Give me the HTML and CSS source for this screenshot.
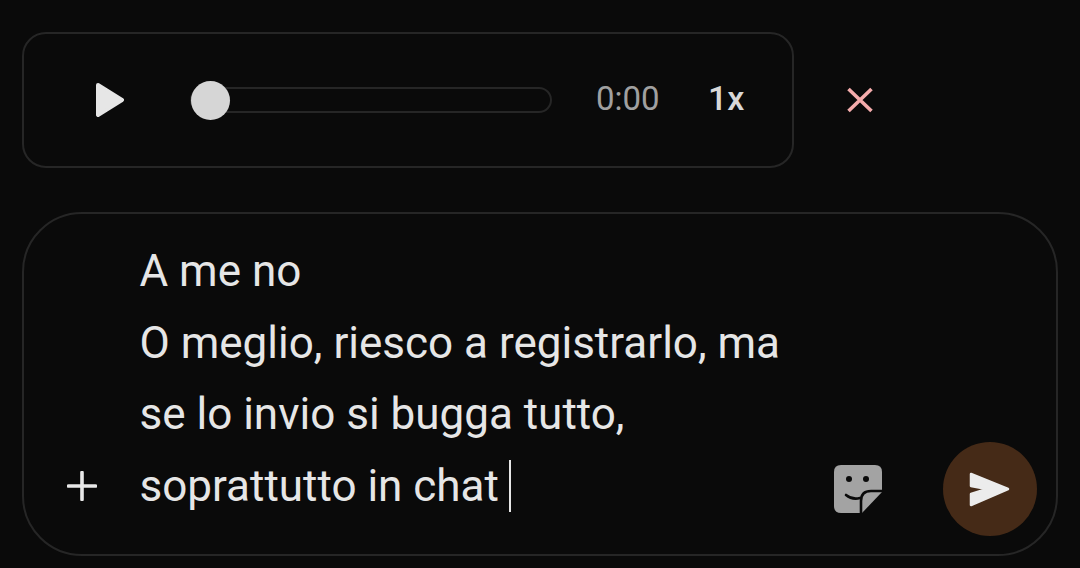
FILE: index.html
```html
<!DOCTYPE html>
<html lang="it">
<head>
<meta charset="utf-8">
<title>Chat</title>
<link rel="stylesheet" href="styles.css">
</head>
<body>
<main class="page">
  <section class="voice-row">
    <div class="player">
      <svg class="play" viewBox="0 0 28 34" width="28" height="34"><path d="M2 2 L26 17 L2 32 Z" fill="#e6e6e6" stroke="#e6e6e6" stroke-width="4" stroke-linejoin="round"/></svg>
      <div class="track"><span class="thumb"></span></div>
      <span class="time">0:00</span>
      <span class="speed">1x</span>
    </div>
    <svg class="close" viewBox="0 0 26 26" width="26" height="26"><path d="M1.500 2 L24.500 24 M24.500 2 L1.500 24" stroke="#f4acac" stroke-width="3.6" fill="none"/></svg>
  </section>
  <section class="composer">
    <svg class="plus" viewBox="0 0 30 30" width="30" height="30"><path d="M15 1.500 V28.500 M1.500 15 H28.500" stroke="#e8e8e8" stroke-width="3.6" stroke-linecap="round" fill="none"/></svg>
    <div class="text">
      <div>A me no</div>
      <div>O meglio, riesco a registrarlo, ma</div>
      <div>se lo invio si bugga tutto,</div>
      <div>soprattutto in chat<span class="caret"></span></div>
    </div>
    <svg class="sticker" viewBox="0 0 48 48" width="48" height="48">
      <path d="M7 0 H41 Q48 0 48 7 V27 L28 48 H7 Q0 48 0 41 V7 Q0 0 7 0 Z" fill="#a3a3a3"/>
      <circle cx="15" cy="14" r="3" fill="#0a0a0a"/>
      <circle cx="32" cy="14" r="3" fill="#0a0a0a"/>
      <path d="M12 30 Q18 35 26 33" stroke="#0a0a0a" stroke-width="2.6" fill="none" stroke-linecap="round"/>
      <path d="M27 48 V36 Q27 26 37 26 H48" stroke="#0a0a0a" stroke-width="2.6" fill="none"/>
    </svg>
    <button class="send" type="button">
      <svg viewBox="0 0 42 36" width="42" height="36"><path d="M2 3 L39 18 L2 34 V23 L18 18 L2 15 Z" fill="#ececec" stroke="#ececec" stroke-width="2.500" stroke-linejoin="round"/></svg>
    </button>
  </section>
</main>
</body>
</html>
```
FILE: styles.css
```css
* { box-sizing: border-box; }
html, body { margin: 0; height: 100%; background: #0a0a0a; overflow: hidden; }
body { font-family: Roboto, "Noto Sans", sans-serif; color: #e6e6e6; }
.page { padding: 32px 22px 12px; display: flex; flex-direction: column; gap: 44px; }
.voice-row { display: flex; align-items: center; gap: 53px; }
.player {
  width: 772px; height: 136px;
  border: 2px solid #262626; border-radius: 24px;
  display: flex; align-items: center;
  padding-left: 72px;
}
.play { flex: none; }
.track {
  flex: none; width: 362px; height: 26px; margin-left: 66px;
  border: 2px solid #262626; border-radius: 13px;
  display: flex; align-items: center;
}
.thumb { width: 39px; height: 39px; margin-left: -1px; border-radius: 50%; background: #d6d6d6; flex: none; }
.time { margin-left: 44px; font-size: 33px; color: #a0a0a0; width: 63px; line-height: 1; margin-top: -3px; }
.speed { margin-left: 49px; font-size: 34px; font-weight: 500; color: #d8d8d8; line-height: 1; margin-top: -5px; }
.close { flex: none; }
.composer {
  width: 1036px; height: 344px;
  border: 2px solid #262626;
  border-radius: 60px;
  display: flex; align-items: flex-end;
  padding: 0 20px 18px 43px;
}
.plus { flex: none; margin-bottom: 35px; }
.text { flex: none; width: 694px; margin-left: 42.5px; margin-right: 0.5px; font-size: 44px; line-height: 71.6px; color: #e6e6e6; margin-bottom: 13.6px; }
.caret { display: inline-block; width: 2px; height: 52px; background: #e6e6e6; margin-left: 10px; vertical-align: -11px; }
.sticker { flex: none; margin-bottom: 23px; }
.send {
  flex: none; width: 94px; height: 94px; margin-left: 61px; padding: 0;
  border: 0; border-radius: 50%; background: #452a17;
  display: flex; align-items: center; justify-content: center;
}
```
